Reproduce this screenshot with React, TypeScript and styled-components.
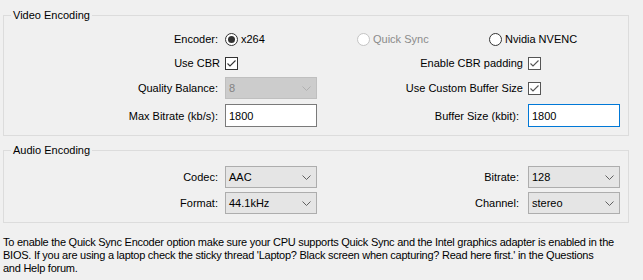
import React from 'react';
import styled, { createGlobalStyle } from 'styled-components';

const GlobalStyle = createGlobalStyle`
  html, body {
    margin: 0;
    background: #f0f0f0;
  }
  body {
    font-family: "Liberation Sans", Arial, sans-serif;
    font-size: 11px;
    color: #000;
  }
`;

const Page = styled.div`
  width: 626px;
  padding: 8px 0 0 3px;
  display: flex;
  flex-direction: column;
  gap: 7px;
`;

const Group = styled.fieldset`
  margin: 0;
  padding: 0;
  min-width: 0;
  border: 1px solid #dcdcdc;
`;

const Legend = styled.legend`
  margin-left: 7px;
  padding: 0 2px;
  line-height: 15px;
`;

const Grid = styled.div<{ $rows: string; $pad: string; $rowGap?: number }>`
  display: grid;
  grid-template-columns: 221px 92px 211px 92px 1fr;
  grid-template-rows: ${(p) => p.$rows};
  row-gap: ${(p) => p.$rowGap ?? 0}px;
  align-items: center;
  padding: ${(p) => p.$pad};
`;

const Label = styled.label<{ $pad: number }>`
  text-align: right;
  padding-right: ${(p) => p.$pad}px;
  white-space: nowrap;
`;

const RadioRow = styled.div`
  grid-column: 2 / 6;
  display: grid;
  grid-template-columns: 132px 132px auto;
  align-items: center;
`;

const RadioItem = styled.div<{ $disabled?: boolean }>`
  display: flex;
  align-items: center;
  gap: 3px;
  color: ${(p) => (p.$disabled ? '#8b8b8b' : '#000')};
`;

const RadioCircle = styled.span<{ $checked?: boolean; $disabled?: boolean }>`
  width: 13px;
  height: 13px;
  box-sizing: border-box;
  border-radius: 50%;
  border: 1px solid ${(p) => (p.$disabled ? '#c4c4c4' : '#333')};
  background: #fff;
  display: flex;
  align-items: center;
  justify-content: center;

  &::after {
    content: '';
    display: ${(p) => (p.$checked ? 'block' : 'none')};
    width: 7px;
    height: 7px;
    border-radius: 50%;
    background: #333;
  }
`;

const CheckBox = styled.span<{ $tone: string }>`
  width: 13px;
  height: 13px;
  box-sizing: border-box;
  border: 1px solid ${(p) => p.$tone};
  background: #fff;
  display: flex;
  align-items: center;
  justify-content: center;
  color: ${(p) => p.$tone};
`;

const Combo = styled.div<{ $disabled?: boolean }>`
  height: 22px;
  box-sizing: border-box;
  border: 1px solid ${(p) => (p.$disabled ? '#bfbfbf' : '#adadad')};
  background: ${(p) => (p.$disabled ? '#cccccc' : '#e5e5e5')};
  color: ${(p) => (p.$disabled ? '#838383' : '#000')};
  display: flex;
  align-items: center;
  justify-content: space-between;
  padding: 0 5px 0 3px;
`;

const TextBox = styled.input<{ $focused?: boolean }>`
  height: 23px;
  width: 92px;
  box-sizing: border-box;
  margin: 0;
  border: 1px solid ${(p) => (p.$focused ? '#0078d7' : '#7a7a7a')};
  background: #fff;
  padding: 0 3px;
  font: inherit;
  color: #000;
  outline: none;
`;

const Footer = styled.p`
  margin: 13px 0 0;
  padding-left: 3px;
  line-height: 13px;
  letter-spacing: -0.25px;
  white-space: nowrap;
`;

const Chevron = ({ color }: { color: string }) => (
  <svg width="9" height="5" viewBox="0 0 9 5">
    <polyline points="0.5,0.5 4.5,4.5 8.5,0.5" fill="none" stroke={color} strokeWidth="1" />
  </svg>
);

const Check = () => (
  <svg width="11" height="11" viewBox="0 0 11 11">
    <polyline points="1.5,5.5 4,8 9.5,2.5" fill="none" stroke="currentColor" strokeWidth="1.1" />
  </svg>
);

const Radio = ({ label, checked, disabled }: { label: string; checked?: boolean; disabled?: boolean }) => (
  <RadioItem $disabled={disabled}>
    <RadioCircle $checked={checked} $disabled={disabled} />
    {label}
  </RadioItem>
);

const Select = ({ value, disabled }: { value: string; disabled?: boolean }) => (
  <Combo $disabled={disabled}>
    <span>{value}</span>
    <Chevron color={disabled ? '#b0b0b0' : '#606060'} />
  </Combo>
);

const App = () => {
  return (
    <>
      <GlobalStyle />
      <Page>
        <Group>
          <Legend>Video Encoding</Legend>
          <Grid $rows="24px 24px 26px 29px" $pad="4px 0 5px">
            <Label $pad={7}>Encoder:</Label>
            <RadioRow>
              <Radio label="x264" checked />
              <Radio label="Quick Sync" disabled />
              <Radio label="Nvidia NVENC" />
            </RadioRow>

            <Label $pad={5}>Use CBR</Label>
            <CheckBox $tone="#333">
              <Check />
            </CheckBox>
            <Label $pad={5}>Enable CBR padding</Label>
            <CheckBox $tone="#555">
              <Check />
            </CheckBox>
            <span />

            <Label $pad={7}>Quality Balance:</Label>
            <Select value="8" disabled />
            <Label $pad={5}>Use Custom Buffer Size</Label>
            <CheckBox $tone="#555">
              <Check />
            </CheckBox>
            <span />

            <Label $pad={7}>Max Bitrate (kb/s):</Label>
            <TextBox defaultValue="1800" />
            <Label $pad={9}>Buffer Size (kbit):</Label>
            <TextBox defaultValue="1800" $focused />
            <span />
          </Grid>
        </Group>

        <Group>
          <Legend>Audio Encoding</Legend>
          <Grid $rows="22px 22px" $pad="8px 0 8px" $rowGap={4}>
            <Label $pad={7}>Codec:</Label>
            <Select value="AAC" />
            <Label $pad={9}>Bitrate:</Label>
            <Select value="128" />
            <span />

            <Label $pad={7}>Format:</Label>
            <Select value="44.1kHz" />
            <Label $pad={9}>Channel:</Label>
            <Select value="stereo" />
            <span />
          </Grid>
        </Group>
      </Page>
      <Footer>
        To enable the Quick Sync Encoder option make sure your CPU supports Quick Sync and the Intel graphics adapter is enabled in the
        <br />
        BIOS. If you are using a laptop check the sticky thread 'Laptop? Black screen when capturing? Read here first.' in the Questions
        <br />
        and Help forum.
      </Footer>
    </>
  );
};

export default App;
